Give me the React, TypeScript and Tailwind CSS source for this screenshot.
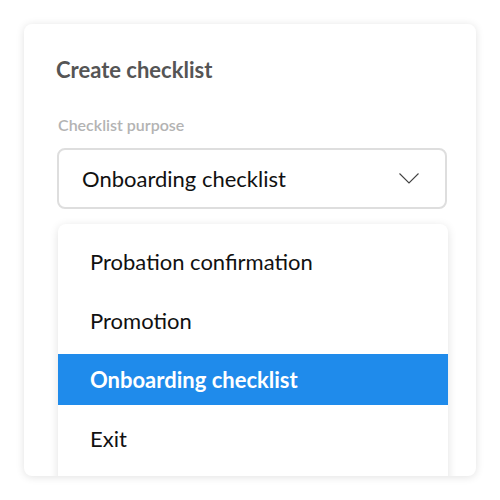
import React from "react";

const options = ["Probation confirmation", "Promotion", "Onboarding checklist", "Exit"];

export default function App() {
  const selected = "Onboarding checklist";

  return (
    <div
      className="w-[500px] h-[500px] bg-white p-6"
      style={{ fontFamily: "Lato, 'Open Sans', sans-serif" }}
    >
      <div className="h-[452px] w-[452px] overflow-hidden rounded-lg bg-white pl-8 pt-8 shadow-[0_1px_8px_rgba(0,0,0,0.12)]">
        <h2 className="text-[22px] leading-7 font-bold text-[#555555]">Create checklist</h2>

        <div className="mt-[31px] ml-[2px] text-[16px] leading-5 font-semibold text-[#b3b3b3]">
          Checklist purpose
        </div>

        {/* select */}
        <div className="mt-[13px] ml-px flex h-[61px] w-[390px] items-center justify-between rounded-lg border-2 border-[#dedede] pl-[23px] pr-[26px]">
          <span className="text-[22px] text-[#111111]">{selected}</span>
          <svg width="20" height="11" viewBox="0 0 20 11" fill="none">
            <path d="M0.5 0.5L10 10L19.5 0.5" stroke="#444" strokeWidth="1.1" />
          </svg>
        </div>

        {/* dropdown */}
        <div className="mt-[15px] ml-[2px] w-[390px] rounded-lg bg-white pt-3 pb-10 shadow-[0_2px_10px_rgba(0,0,0,0.12)] flex flex-col gap-2">
          {options.map((o) => (
            <div
              key={o}
              className={
                o === selected
                  ? "flex h-[51px] items-center bg-[#1f8beb] px-8 text-[22px] font-bold text-white"
                  : "flex h-[51px] items-center px-8 text-[22px] text-[#111111]"
              }
            >
              {o}
            </div>
          ))}
        </div>
      </div>
    </div>
  );
}
